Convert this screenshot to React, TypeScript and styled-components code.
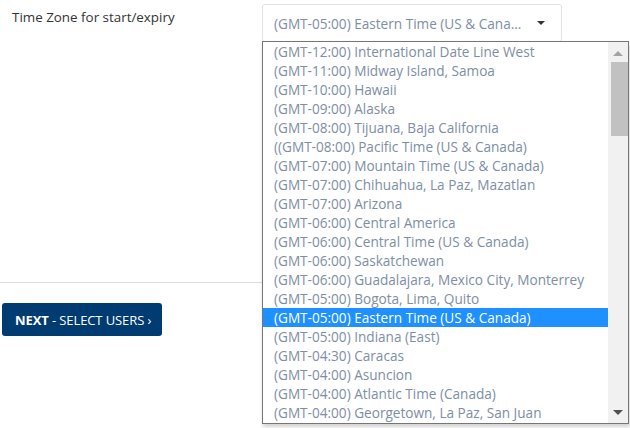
import React from "react";
import styled, { createGlobalStyle } from "styled-components";

const GlobalStyle = createGlobalStyle`
  html, body { margin: 0; padding: 0; background: #fff; }
  body { font-family: "Open Sans", "Noto Sans", sans-serif; width: 630px; height: 428px; overflow: hidden; }
`;

const Page = styled.div`
  position: relative;
  width: 630px;
  height: 428px;
`;

const FormRow = styled.div`
  display: grid;
  grid-template-columns: 262px 300px;
  height: 283px;
  border-bottom: 1px solid #dcdcdc;
  box-sizing: border-box;
  width: 262px;
`;

const Label = styled.div`
  padding: 8px 0 0 12px;
  font-size: 13.4px;
  color: #333;
  line-height: 18px;
`;

const SelectWrap = styled.div`
  position: relative;
  padding-top: 4px;
`;

const SelectBox = styled.div`
  box-sizing: border-box;
  width: 300px;
  height: 38px;
  border: 1px solid #e2e2e2;
  border-radius: 3px;
  display: flex;
  align-items: center;
  padding: 0 16px 0 11px;
  gap: 10px;
  background: #fff;
`;

const SelectText = styled.span`
  flex: 1;
  min-width: 0;
  white-space: nowrap;
  overflow: hidden;
  text-overflow: ellipsis;
  font-size: 13.6px;
  color: #7d8ea5;
`;

const Caret = styled.span`
  width: 0;
  height: 0;
  border-left: 4px solid transparent;
  border-right: 4px solid transparent;
  border-top: 4px solid #333;
`;

const Dropdown = styled.div`
  position: absolute;
  left: 0;
  top: 41px;
  width: 367px;
  box-sizing: border-box;
  border: 1px solid #767676;
  background: #fff;
  display: flex;
  box-shadow: 1px 3px 4px rgba(0, 0, 0, 0.18);
  z-index: 2;
`;

const List = styled.ul`
  list-style: none;
  margin: 0;
  padding: 0;
  flex: 1;
  height: 381px;
  overflow: hidden;
`;

const Option = styled.li<{ $selected?: boolean }>`
  height: 19px;
  line-height: 19px;
  padding-left: 11px;
  font-size: 13.6px;
  white-space: nowrap;
  color: ${(p) => (p.$selected ? "#fff" : "#7d8ea5")};
  background: ${(p) => (p.$selected ? "#1e90ff" : "transparent")};
`;

const Scrollbar = styled.div`
  width: 20px;
  background: #f1f1f1;
  display: flex;
  flex-direction: column;
  align-items: center;
  padding: 9px 0 8px;
  box-sizing: border-box;
`;

const Arrow = styled.span<{ $down?: boolean }>`
  width: 0;
  height: 0;
  border-left: 5px solid transparent;
  border-right: 5px solid transparent;
  ${(p) =>
    p.$down
      ? "border-top: 5px solid #505050;"
      : "border-bottom: 5px solid #a3a3a3;"}
`;

const Thumb = styled.div`
  width: 17px;
  height: 74px;
  background: #c1c1c1;
  margin-top: 6px;
  margin-left: 2px;
`;

const Spacer = styled.div`
  flex: 1;
`;

const Footer = styled.div`
  padding: 20px 0 0 2px;
`;

const NextButton = styled.button`
  box-sizing: border-box;
  height: 33px;
  width: 160px;
  border: none;
  border-radius: 3px;
  background: #003b71;
  color: #fff;
  font-family: "Open Sans", "Noto Sans", sans-serif;
  font-size: 13px;
  letter-spacing: -0.1px;
  padding: 0 0 0 13px;
  text-align: left;
  display: flex;
  align-items: center;
`;

const Bold = styled.b`
  font-weight: 700;
`;

const zones = [
  "(GMT-12:00) International Date Line West",
  "(GMT-11:00) Midway Island, Samoa",
  "(GMT-10:00) Hawaii",
  "(GMT-09:00) Alaska",
  "(GMT-08:00) Tijuana, Baja California",
  "((GMT-08:00) Pacific Time (US & Canada)",
  "(GMT-07:00) Mountain Time (US & Canada)",
  "(GMT-07:00) Chihuahua, La Paz, Mazatlan",
  "(GMT-07:00) Arizona",
  "(GMT-06:00) Central America",
  "(GMT-06:00) Central Time (US & Canada)",
  "(GMT-06:00) Saskatchewan",
  "(GMT-06:00) Guadalajara, Mexico City, Monterrey",
  "(GMT-05:00) Bogota, Lima, Quito",
  "(GMT-05:00) Eastern Time (US & Canada)",
  "(GMT-05:00) Indiana (East)",
  "(GMT-04:30) Caracas",
  "(GMT-04:00) Asuncion",
  "(GMT-04:00) Atlantic Time (Canada)",
  "(GMT-04:00) Georgetown, La Paz, San Juan",
];

export default function App() {
  return (
    <Page>
      <GlobalStyle />
      <FormRow>
        <Label>Time Zone for start/expiry</Label>
        <SelectWrap>
          <SelectBox>
            <SelectText>(GMT-05:00) Eastern Time (US &amp; Canada)</SelectText>
            <Caret />
          </SelectBox>
          <Dropdown>
            <List>
              {zones.map((z, i) => (
                <Option key={i} $selected={i === 14}>
                  {z}
                </Option>
              ))}
            </List>
            <Scrollbar>
              <Arrow />
              <Thumb />
              <Spacer />
              <Arrow $down />
            </Scrollbar>
          </Dropdown>
        </SelectWrap>
      </FormRow>
      <Footer>
        <NextButton>
          <Bold>NEXT</Bold>&nbsp;- SELECT USERS ›
        </NextButton>
      </Footer>
    </Page>
  );
}
